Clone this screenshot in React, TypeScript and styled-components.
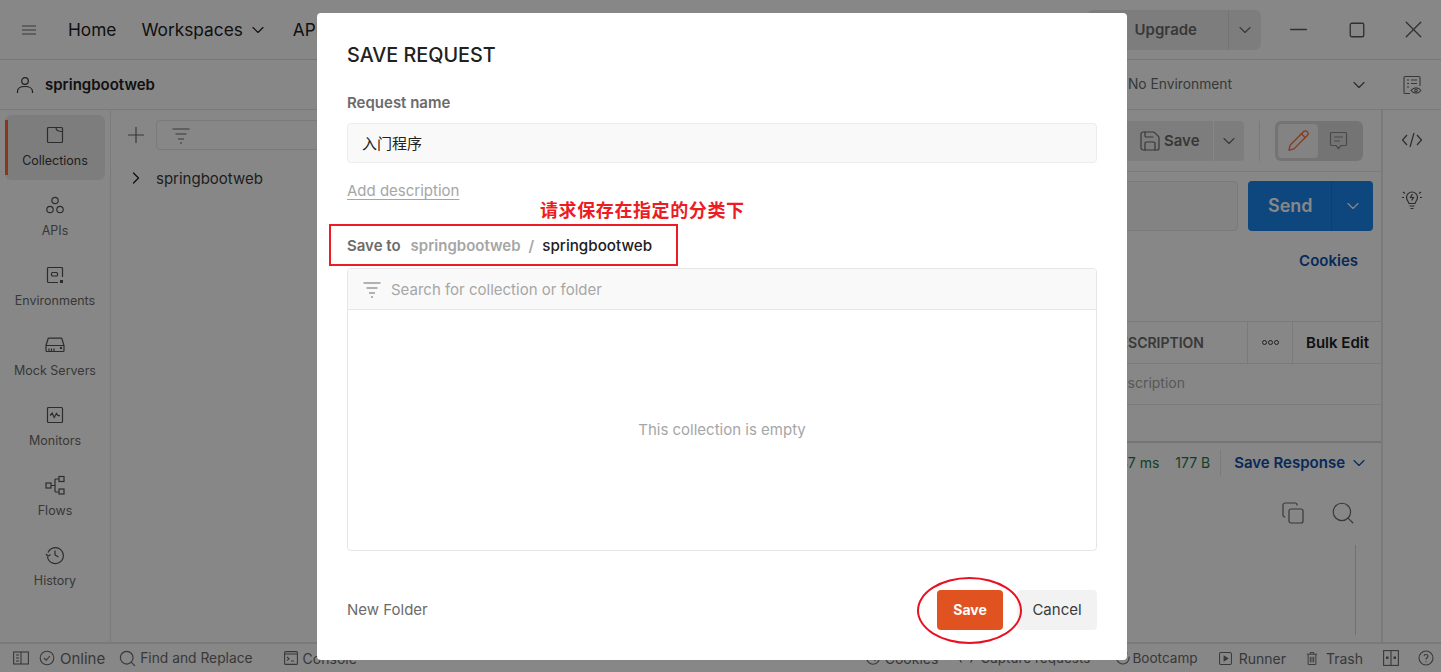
import React from "react"
import styled, { createGlobalStyle } from "styled-components"
import { ChevronDown, ChevronRight, Plus, X, Minus, Square, Pencil, Search, Copy, Save } from "lucide-react"

const GlobalStyle = createGlobalStyle`
  html, body {
    margin: 0;
    padding: 0;
    height: 100%;
    overflow: hidden;
    background: #fff;
  }
  * {
    box-sizing: border-box;
  }
  body {
    font-family: Inter, "Noto Sans CJK SC", sans-serif;
    color: #212121;
  }
`

const Shell = styled.div`
  display: flex;
  flex-direction: column;
  height: 672px;
  background: #fff;
`

const TopBar = styled.header`
  display: flex;
  align-items: center;
  flex: 0 0 60px;
  border-bottom: 1px solid #e0e0e0;
  padding-left: 20px;
`

const MenuIcon = styled.span`
  display: flex;
  width: 18px;
  margin-right: 30px;
  color: #6b6b6b;
`

const NavItem = styled.span`
  display: flex;
  align-items: center;
  gap: 5px;
  font-size: 17.3px;
  color: #212121;
  margin-right: 25px;
  white-space: nowrap;
`

const Spacer = styled.div`
  flex: 1;
`

const UpgradeGroup = styled.div`
  display: flex;
  align-items: center;
  height: 40px;
  background: #ededed;
  border-radius: 6px;
  margin-right: 9px;
`

const UpgradeLabel = styled.span`
  padding: 0 31px 0 48px;
  font-size: 15px;
  font-weight: 600;
  color: #6b6b6b;
`

const UpgradeCaret = styled.span`
  display: flex;
  align-items: center;
  justify-content: center;
  width: 33px;
  height: 40px;
  color: #6b6b6b;
  border-left: 1px solid #dcdcdc;
`

const WindowButton = styled.span<{ $width: number }>`
  display: flex;
  align-items: center;
  justify-content: center;
  width: ${(p) => p.$width}px;
  color: #5c5c5c;
`

const WorkspaceBar = styled.div`
  display: flex;
  align-items: center;
  flex: 0 0 50px;
  border-bottom: 1px solid #e6e6e6;
  padding-left: 16px;
`

const WorkspaceName = styled.span`
  margin-left: 11px;
  font-size: 15px;
  font-weight: 600;
  color: #212121;
`

const EnvironmentLabel = styled.span`
  padding-bottom: 1px;
  font-size: 13.8px;
  color: #6b6b6b;
  margin-right: 117px;
`

const EnvironmentIcon = styled.span`
  display: flex;
  width: 59px;
  justify-content: center;
  margin-left: 13px;
  color: #6b6b6b;
`

const Body = styled.div`
  flex: 1;
  display: flex;
  min-height: 0;
`

const Sidebar = styled.nav`
  flex: 0 0 111px;
  border-right: 1px solid #e6e6e6;
  padding: 5px 5px 0;
`

const SideItem = styled.div<{ $active?: boolean }>`
  position: relative;
  display: flex;
  flex-direction: column;
  align-items: center;
  width: 100px;
  height: 70px;
  padding-top: 10px;
  gap: 8px;
  font-size: 12.5px;
  color: #6b6b6b;
  border-radius: 6px;
  ${(p) => (p.$active ? "background: #ededed; height: 65px; margin-bottom: 5px; color: #3b3b3b;" : "")}
  ${(p) =>
    p.$active
      ? `&::before {
          content: "";
          position: absolute;
          left: 0;
          top: 5px;
          bottom: 5px;
          width: 3px;
          background: #ff6c37;
        }`
      : ""}
`

const SideIcon = styled.span`
  display: flex;
  height: 20px;
  align-items: center;
  color: #545454;
`

const CollectionsPanel = styled.section`
  flex: 0 0 400px;
  padding: 10px 0 0 15px;
`

const PanelTools = styled.div`
  display: flex;
  align-items: center;
  height: 30px;
  margin-left: -3px;
  color: #6b6b6b;
`

const FilterBox = styled.div`
  display: flex;
  align-items: center;
  flex: 1;
  height: 30px;
  margin-left: 7px;
  padding-left: 14px;
  border: 1px solid #e6e6e6;
  border-radius: 4px;
`

const TreeRow = styled.div`
  display: flex;
  align-items: center;
  gap: 10px;
  margin-top: 18px;
  font-size: 15px;
  color: #3b3b3b;
`

const RequestPane = styled.section`
  flex: 1;
  display: flex;
  flex-direction: column;
  min-width: 0;
`

const TabBar = styled.div`
  display: flex;
  align-items: center;
  justify-content: flex-end;
  flex: 0 0 62px;
  border-bottom: 1px solid #e6e6e6;
  padding-right: 18px;
`

const SaveGroup = styled.div`
  display: flex;
  align-items: center;
  gap: 2px;
  height: 40px;
  width: 90px;
  padding-left: 15px;
  background: #ededed;
  border-radius: 4px 0 0 4px;
  font-size: 15px;
  font-weight: 600;
  color: #6b6b6b;
`

const SaveCaret = styled.span`
  display: flex;
  align-items: center;
  justify-content: center;
  width: 30px;
  height: 40px;
  margin-left: 1px;
  background: #ededed;
  color: #6b6b6b;
  border-radius: 0 4px 4px 0;
`

const ToolDivider = styled.span`
  width: 1px;
  height: 40px;
  margin: 0 15px;
  background: #e6e6e6;
`

const ModeToggle = styled.div`
  display: flex;
  align-items: center;
  width: 88px;
  height: 40px;
  padding: 3px;
  background: #dcdcdc;
  border-radius: 6px;
`

const ModeButton = styled.span<{ $active?: boolean }>`
  display: flex;
  align-items: center;
  justify-content: center;
  width: 40px;
  height: 34px;
  border-radius: 4px;
  background: ${(p) => (p.$active ? "#f7f7f7" : "transparent")};
  color: ${(p) => (p.$active ? "#ff6c37" : "#8a8a8a")};
`

const UrlRow = styled.div`
  display: flex;
  align-items: center;
  padding: 9px 8px 0 0;
  gap: 10px;
`

const UrlInput = styled.div`
  flex: 1;
  height: 50px;
  background: #f7f7f7;
  border: 1px solid #e6e6e6;
  border-radius: 4px;
`

const SendButton = styled.div`
  display: flex;
  align-items: center;
  width: 125px;
  height: 50px;
  background: #1c84ee;
  border-radius: 4px;
  color: #fff;
  font-size: 18px;
  font-weight: 600;
`

const SendLabel = styled.span`
  flex: 0 0 84px;
  padding-left: 20px;
  border-right: 1px solid #1a78d8;
  height: 50px;
  line-height: 50px;
`

const SendCaret = styled.span`
  flex: 1;
  display: flex;
  justify-content: center;
`

const CookiesRow = styled.div`
  display: flex;
  justify-content: flex-end;
  padding: 20px 23px 0 0;
  height: 90px;
  font-size: 15px;
  font-weight: 600;
  color: #0f4fa8;
`

const TableHead = styled.div`
  display: flex;
  align-items: center;
  justify-content: flex-end;
  height: 43px;
  border-top: 1px solid #e6e6e6;
  border-bottom: 1px solid #e6e6e6;
`

const HeadCell = styled.span`
  padding-right: 43px;
  font-size: 14px;
  font-weight: 600;
  color: #6b6b6b;
`

const DotsCell = styled.span`
  display: flex;
  align-items: center;
  justify-content: center;
  gap: 1px;
  width: 46px;
  height: 41px;
  border-left: 1px solid #e6e6e6;
  border-right: 1px solid #e6e6e6;
`

const Dot = styled.i`
  width: 5px;
  height: 5px;
  border: 1px solid #3b3b3b;
  border-radius: 50%;
`

const BulkCell = styled.span`
  width: 88px;
  padding-left: 13px;
  font-size: 15px;
  font-weight: 600;
  color: #212121;
`

const PlaceholderRow = styled.div`
  display: flex;
  align-items: center;
  justify-content: flex-end;
  height: 41px;
  padding: 0 196px 3px 0;
  border-bottom: 1px solid #e6e6e6;
  font-size: 14px;
  color: #a6a6a6;
`

const ResponseHead = styled.div`
  display: flex;
  align-items: center;
  justify-content: flex-end;
  height: 41px;
  margin-top: 36px;
  border-top: 2px solid #dcdcdc;
  font-size: 14px;
`

const Metric = styled.span<{ $gap: number }>`
  color: #1e7a45;
  margin-right: ${(p) => p.$gap}px;
  white-space: nowrap;
`

const SaveResponse = styled.span`
  display: flex;
  align-items: center;
  gap: 4px;
  height: 26px;
  margin-right: 12px;
  padding-left: 13px;
  border-left: 1px solid #e6e6e6;
  font-size: 15px;
  font-weight: 600;
  color: #0f4fa8;
`

const ResponseTools = styled.div`
  display: flex;
  align-items: center;
  justify-content: flex-end;
  gap: 25px;
  padding: 18px 25px 0 0;
  color: #6b6b6b;
`

const ResponseBody = styled.div`
  flex: 1;
  display: flex;
  justify-content: flex-end;
  padding: 19px 25px 7px 0;
`

const ScrollLine = styled.span`
  width: 1px;
  background: #d6d6d6;
`

const RightRail = styled.aside`
  flex: 0 0 60px;
  display: flex;
  flex-direction: column;
  align-items: center;
  padding-top: 20px;
  gap: 38px;
  border-left: 2px solid #e6e6e6;
  color: #545454;
`

const StatusBar = styled.footer`
  display: flex;
  align-items: center;
  flex: 0 0 30px;
  border-top: 2px solid #e6e6e6;
  padding: 0 7px 0 13px;
  font-size: 14px;
  color: #6b6b6b;
  white-space: nowrap;
`

const StatusItem = styled.span<{ $gap?: number; $iconGap?: number; $size?: number }>`
  display: flex;
  align-items: center;
  gap: ${(p) => p.$iconGap ?? 5}px;
  margin-right: ${(p) => p.$gap ?? 0}px;
  font-size: ${(p) => p.$size ?? 14}px;
`

const Overlay = styled.div`
  position: fixed;
  inset: 0;
  display: flex;
  align-items: flex-start;
  padding: 13px 0 0 317px;
  background: rgba(0, 0, 0, 0.47);
`

const Modal = styled.div`
  position: relative;
  display: flex;
  flex-direction: column;
  width: 810px;
  height: 647px;
  padding: 28px 30px 30px;
  background: #fff;
  border-radius: 4px;
`

const Title = styled.h2`
  margin: 0;
  font-size: 19.8px;
  line-height: 28px;
  font-weight: 500;
  color: #212121;
`

const FieldLabel = styled.div`
  margin-top: 24px;
  font-size: 15px;
  line-height: 20px;
  font-weight: 600;
  color: #6b6b6b;
`

const NameInput = styled.div`
  display: flex;
  align-items: center;
  height: 40px;
  margin-top: 10px;
  padding: 0 0 2px 14px;
  background: #f9f9f9;
  border: 1px solid #ededed;
  border-radius: 4px;
  font-size: 15px;
  color: #212121;
`

const AddDescription = styled.span`
  align-self: flex-start;
  margin-top: 18px;
  font-size: 15px;
  line-height: 20px;
  color: #a6a6a6;
  text-decoration: underline;
  text-underline-offset: 3px;
`

const SaveToRow = styled.div`
  position: relative;
  display: flex;
  align-items: center;
  margin-top: 35px;
  font-size: 15px;
  line-height: 20px;
  font-weight: 600;
  color: #6b6b6b;
`

const SaveToLabel = styled.span`
  margin-right: 10px;
`

const Crumb = styled.span<{ $current?: boolean }>`
  color: ${(p) => (p.$current ? "#212121" : "#a6a6a6")};
  font-weight: ${(p) => (p.$current ? 500 : 600)};
  font-size: ${(p) => (p.$current ? 15.2 : 15)}px;
`

const CrumbSlash = styled.span`
  margin: 0 8px;
  color: #a6a6a6;
`

const RedFrame = styled.span`
  position: absolute;
  left: -18px;
  top: -12px;
  width: 349px;
  height: 42px;
  border: 2px solid #ed1c24;
`

const RedNote = styled.span`
  position: absolute;
  left: 193px;
  top: -39px;
  font-size: 18px;
  line-height: 24px;
  font-weight: 700;
  letter-spacing: 0.6px;
  color: #ed1c24;
  white-space: nowrap;
  font-family: "Noto Sans CJK SC", sans-serif;
`

const Browser = styled.div`
  display: flex;
  flex-direction: column;
  height: 283px;
  margin-top: 12px;
  border: 1px solid #e6e6e6;
  border-radius: 4px;
  overflow: hidden;
`

const BrowserSearch = styled.div`
  display: flex;
  align-items: center;
  gap: 9px;
  flex: 0 0 41px;
  padding-left: 14px;
  background: #f9f9f9;
  border-bottom: 1px solid #e6e6e6;
  font-size: 15px;
  color: #a6a6a6;
  svg {
    color: #6b6b6b;
  }
`

const BrowserEmpty = styled.div`
  flex: 1;
  display: flex;
  align-items: center;
  justify-content: center;
  padding-bottom: 1px;
  font-size: 15px;
  color: #a6a6a6;
`

const Footer = styled.div`
  display: flex;
  align-items: center;
  height: 40px;
  margin-top: 39px;
`

const NewFolder = styled.span`
  flex: 1;
  padding-bottom: 2px;
  font-size: 15px;
  color: #6b6b6b;
`

const PrimaryButton = styled.span`
  position: relative;
  display: flex;
  align-items: center;
  justify-content: center;
  width: 66px;
  height: 40px;
  padding-bottom: 2px;
  margin-right: 14px;
  background: #e05320;
  border-radius: 4px;
  font-size: 14px;
  font-weight: 700;
  color: #fff;
`

const RedCircle = styled.span`
  position: absolute;
  left: -20px;
  top: -13px;
  width: 105px;
  height: 67px;
  border: 2px solid #e81123;
  border-radius: 50%;
`

const CancelButton = styled.span`
  display: flex;
  align-items: center;
  justify-content: center;
  width: 80px;
  height: 40px;
  padding-bottom: 2px;
  background: #f2f2f2;
  border-radius: 4px;
  font-size: 15px;
  color: #3b3b3b;
`

const Glyph = ({ size = 20, children }: { size?: number; children: React.ReactNode }) => (
  <svg width={size} height={size} viewBox="0 0 20 20" fill="none" stroke="currentColor" strokeWidth="1.2">
    {children}
  </svg>
)

const FilterGlyph = () => (
  <Glyph>
    <path d="M1.500 4h17M4.500 9h11M7 14h6M9 18h2" />
  </Glyph>
)

const Caret = () => <ChevronDown size={20} strokeWidth={1.4} />

const sideItems: [string, React.ReactNode][] = [
  [
    "Collections",
    <Glyph key="c">
      <path d="M2.500 3.500a1 1 0 0 1 1-1h13a1 1 0 0 1 1 1v13a1 1 0 0 1-1 1h-13a1 1 0 0 1-1-1zM11 2.500c0 2.500 1.500 4 6.500 4" />
    </Glyph>,
  ],
  [
    "APIs",
    <Glyph key="a">
      <circle cx="10" cy="5.500" r="3.200" />
      <circle cx="5" cy="14.500" r="3.200" />
      <circle cx="15" cy="14.500" r="3.200" />
    </Glyph>,
  ],
  [
    "Environments",
    <Glyph key="e">
      <path d="M17.500 12V3.500a1 1 0 0 0-1-1h-13a1 1 0 0 0-1 1v13a1 1 0 0 0 1 1H13" />
      <rect x="6.500" y="7.500" width="6" height="3.500" rx="1" />
      <rect x="15" y="15" width="3" height="3" fill="currentColor" stroke="none" />
    </Glyph>,
  ],
  [
    "Mock Servers",
    <Glyph key="m">
      <path d="M1 10.500 3 4a1 1 0 0 1 1-.8h12a1 1 0 0 1 1 .8l2 6.500v5a1 1 0 0 1-1 1H2a1 1 0 0 1-1-1zM1 10.500h18M4 13.500v3M6.500 13.500v3M9 13.500v3" />
      <circle cx="16" cy="13" r=".6" fill="currentColor" />
    </Glyph>,
  ],
  [
    "Monitors",
    <Glyph key="o">
      <rect x="2.500" y="2.500" width="15" height="15" rx="1" />
      <path d="m5 10.500 2.200-2.500 2 4.500 2.300-4 1.500 2.200H15" />
    </Glyph>,
  ],
  [
    "Flows",
    <Glyph key="f">
      <rect x="1" y="8" width="5" height="5" />
      <rect x="14" y="1.500" width="5" height="5" />
      <rect x="14" y="14" width="5" height="5" />
      <path d="M6 10.500h4M10 4v13M10 4h4M10 17h4" />
    </Glyph>,
  ],
  [
    "History",
    <Glyph key="h">
      <path d="M3 7.500a8 8 0 1 1-.5 4.500M1 9l2 2.200L5.500 9.500M10 5.500V10l3.500 2" />
    </Glyph>,
  ],
]

export default function App() {
  return (
    <>
      <GlobalStyle />
      <Shell>
        <TopBar>
          <MenuIcon>
            <svg width="18" height="18" viewBox="0 0 18 18" fill="none" stroke="currentColor" strokeWidth="1.100">
              <path d="M2 5h14M2 9h14M2 13h14" />
            </svg>
          </MenuIcon>
          <NavItem>Home</NavItem>
          <NavItem>
            Workspaces <Caret />
          </NavItem>
          <NavItem>API Network</NavItem>
          <Spacer />
          <UpgradeGroup>
            <UpgradeLabel>Upgrade</UpgradeLabel>
            <UpgradeCaret>
              <Caret />
            </UpgradeCaret>
          </UpgradeGroup>
          <WindowButton $width={57}>
            <Minus size={27} strokeWidth={1.2} />
          </WindowButton>
          <WindowButton $width={59}>
            <Square size={18} strokeWidth={1.8} />
          </WindowButton>
          <WindowButton $width={55}>
            <X size={29} strokeWidth={1.1} />
          </WindowButton>
        </TopBar>
        <WorkspaceBar>
          <svg width="18" height="18" viewBox="0 0 18 18" fill="none" stroke="#3b3b3b" strokeWidth="1.200">
            <circle cx="9" cy="5" r="3.300" />
            <path d="M1.500 17v-1.500c0-3 3-5 7.500-5s7.500 2 7.500 5V17" />
          </svg>
          <WorkspaceName>springbootweb</WorkspaceName>
          <Spacer />
          <EnvironmentLabel>No Environment</EnvironmentLabel>
          <ChevronDown size={20} strokeWidth={1.4} color="#545454" />
          <EnvironmentIcon>
            <svg width="20" height="20" viewBox="0 0 20 20" fill="none" stroke="currentColor" strokeWidth="1.100">
              <path d="M8 18.500H3a1 1 0 0 1-1-1v-15a1 1 0 0 1 1-1h14a1 1 0 0 1 1 1V11M5 5h2M9 5h6M5 8.500h2M9 8.500h6M5 12h2" />
              <path d="M9 15.500c2.500-3.500 7.500-3.500 10 0-2.500 3.500-7.500 3.500-10 0z" />
              <circle cx="14" cy="15.500" r="1.300" />
            </svg>
          </EnvironmentIcon>
        </WorkspaceBar>
        <Body>
          <Sidebar>
            {sideItems.map(([label, icon], index) => (
              <SideItem key={label} $active={index === 0}>
                <SideIcon>{icon}</SideIcon>
                {label}
              </SideItem>
            ))}
          </Sidebar>
          <CollectionsPanel>
            <PanelTools>
              <Plus size={26} strokeWidth={1.1} />
              <FilterBox>
                <FilterGlyph />
              </FilterBox>
            </PanelTools>
            <TreeRow>
              <ChevronRight size={20} strokeWidth={1.6} color="#212121" />
              springbootweb
            </TreeRow>
          </CollectionsPanel>
          <RequestPane>
            <TabBar>
              <SaveGroup>
                <Save size={24} strokeWidth={1.2} />
                Save
              </SaveGroup>
              <SaveCaret>
                <Caret />
              </SaveCaret>
              <ToolDivider />
              <ModeToggle>
                <ModeButton $active>
                  <Pencil size={23} strokeWidth={1.3} />
                </ModeButton>
                <ModeButton>
                  <svg width="19" height="19" viewBox="0 0 19 19" fill="none" stroke="currentColor" strokeWidth="1.200">
                    <path d="M2.500 1.500h14a1 1 0 0 1 1 1v11a1 1 0 0 1-1 1h-4.500l-2.500 3-2.500-3H2.500a1 1 0 0 1-1-1v-11a1 1 0 0 1 1-1zM5 6h9M5 10h6" />
                  </svg>
                </ModeButton>
              </ModeToggle>
            </TabBar>
            <UrlRow>
              <UrlInput />
              <SendButton>
                <SendLabel>Send</SendLabel>
                <SendCaret>
                  <Caret />
                </SendCaret>
              </SendButton>
            </UrlRow>
            <CookiesRow>Cookies</CookiesRow>
            <TableHead>
              <HeadCell>DESCRIPTION</HeadCell>
              <DotsCell>
                <Dot />
                <Dot />
                <Dot />
              </DotsCell>
              <BulkCell>Bulk Edit</BulkCell>
            </TableHead>
            <PlaceholderRow>Description</PlaceholderRow>
            <ResponseHead>
              <Metric $gap={16}>37 ms</Metric>
              <Metric $gap={10}>177 B</Metric>
              <SaveResponse>
                Save Response <Caret />
              </SaveResponse>
            </ResponseHead>
            <ResponseTools>
              <Copy size={24} strokeWidth={1.2} />
              <Search size={26} strokeWidth={1.1} />
            </ResponseTools>
            <ResponseBody>
              <ScrollLine />
            </ResponseBody>
          </RequestPane>
          <RightRail>
            <svg width="22" height="20" viewBox="0 0 22 20" fill="none" stroke="currentColor" strokeWidth="1.200">
              <path d="M6 5 1.500 10 6 15M16 5l4.500 5L16 15M13 3 9 17" />
            </svg>
            <svg width="22" height="22" viewBox="0 0 22 22" fill="none" stroke="currentColor" strokeWidth="1.200">
              <path d="M8 15.500c-.2-2-2.500-3-2.500-6a5.500 5.500 0 0 1 11 0c0 3-2.300 4-2.500 6zM8.500 18h5M9.500 20.500h3M11.500 6l-2 3.500h3l-2 3M1 9.500h2M19 9.500h2M2 4l2 1.500M20 4l-2 1.500" />
            </svg>
          </RightRail>
        </Body>
        <StatusBar>
          <StatusItem $gap={10}>
            <svg width="16" height="14" viewBox="0 0 16 14" fill="none" stroke="currentColor" strokeWidth="1.100">
              <rect x=".6" y="1" width="14.800" height="12" />
              <path d="M8 1v12M3 4h3M3 7h3M3 10h3" />
            </svg>
          </StatusItem>
          <StatusItem $gap={13} $size={15}>
            <svg width="16" height="16" viewBox="0 0 16 16" fill="none" stroke="currentColor" strokeWidth="1.100">
              <circle cx="8" cy="8" r="6.800" />
              <path d="m5 8 2.200 2.200L11 6" />
            </svg>
            Online
          </StatusItem>
          <StatusItem $gap={31} $iconGap={3} $size={13.8}>
            <Search size={19} strokeWidth={1.5} />
            Find and Replace
          </StatusItem>
          <StatusItem>
            <svg width="14" height="14" viewBox="0 0 14 14" fill="none" stroke="currentColor" strokeWidth="1.100">
              <rect x=".6" y=".6" width="12.800" height="12.800" rx="1" />
              <path d="M.6 3h12.800M3 6l2 1.800L3 9.600M7 10h3" />
            </svg>
            Console
          </StatusItem>
          <Spacer />
          <StatusItem $gap={21}>
            <svg width="14" height="14" viewBox="0 0 14 14" fill="none" stroke="currentColor" strokeWidth="1.100">
              <circle cx="7" cy="7" r="6.300" />
              <circle cx="5" cy="5.500" r=".7" fill="currentColor" />
              <circle cx="9" cy="8.500" r=".7" fill="currentColor" />
            </svg>
            Cookies
          </StatusItem>
          <StatusItem $gap={26} $iconGap={7} $size={13.5}>
            <svg width="14" height="14" viewBox="0 0 14 14" fill="none" stroke="currentColor" strokeWidth="1.100">
              <path d="M2.500 11.500a6.500 6.500 0 0 1 0-9M11.500 2.500a6.500 6.500 0 0 1 0 9M5 9a3 3 0 0 1 0-4M9 5a3 3 0 0 1 0 4" />
            </svg>
            Capture requests
          </StatusItem>
          <StatusItem $gap={21} $iconGap={2} $size={13.6}>
            <svg width="14" height="14" viewBox="0 0 14 14" fill="none" stroke="currentColor" strokeWidth="1.100">
              <path d="M11.500 2.500a6.300 6.300 0 1 0 1.500 3" />
            </svg>
            Bootcamp
          </StatusItem>
          <StatusItem $gap={20} $iconGap={7}>
            <svg width="13" height="13" viewBox="0 0 14 14" fill="none" stroke="currentColor" strokeWidth="1.100">
              <rect x=".6" y=".6" width="12.800" height="12.800" rx="1.500" />
              <path d="M5.500 4.500v5L9.500 7z" fill="currentColor" />
            </svg>
            Runner
          </StatusItem>
          <StatusItem $gap={20} $iconGap={8}>
            <svg width="12" height="15" viewBox="0 0 14 16" fill="none" stroke="currentColor" strokeWidth="1.100">
              <path d="M1 3h12M5 3V1h4v2M2.500 3v12h9V3M5 6v6.500M7 6v6.500M9 6v6.500" />
            </svg>
            Trash
          </StatusItem>
          <StatusItem $gap={19}>
            <svg width="16" height="16" viewBox="0 0 16 16" fill="none" stroke="currentColor" strokeWidth="1.100">
              <rect x=".6" y=".6" width="14.800" height="14.800" />
              <path d="M8 .6v14.800" />
              <rect x="3" y="6.500" width="2.500" height="2.500" fill="currentColor" stroke="none" />
              <rect x="10.500" y="6.500" width="2.500" height="2.500" fill="currentColor" stroke="none" />
            </svg>
          </StatusItem>
          <StatusItem>
            <svg width="16" height="16" viewBox="0 0 16 16" fill="none" stroke="currentColor" strokeWidth="1.100">
              <circle cx="8" cy="8" r="7" />
              <path d="M6 6.200C6 4 10 4 10 6.200 10 7.800 8 7.800 8 9.500M8 11.200v1" />
            </svg>
          </StatusItem>
        </StatusBar>
      </Shell>
      <Overlay>
        <Modal>
          <Title>SAVE REQUEST</Title>
          <FieldLabel>Request name</FieldLabel>
          <NameInput>入门程序</NameInput>
          <AddDescription>Add description</AddDescription>
          <SaveToRow>
            <SaveToLabel>Save to</SaveToLabel>
            <Crumb>springbootweb</Crumb>
            <CrumbSlash>/</CrumbSlash>
            <Crumb $current>springbootweb</Crumb>
            <RedFrame />
            <RedNote>请求保存在指定的分类下</RedNote>
          </SaveToRow>
          <Browser>
            <BrowserSearch>
              <FilterGlyph />
              Search for collection or folder
            </BrowserSearch>
            <BrowserEmpty>This collection is empty</BrowserEmpty>
          </Browser>
          <Footer>
            <NewFolder>New Folder</NewFolder>
            <PrimaryButton>
              Save
              <RedCircle />
            </PrimaryButton>
            <CancelButton>Cancel</CancelButton>
          </Footer>
        </Modal>
      </Overlay>
    </>
  )
}
